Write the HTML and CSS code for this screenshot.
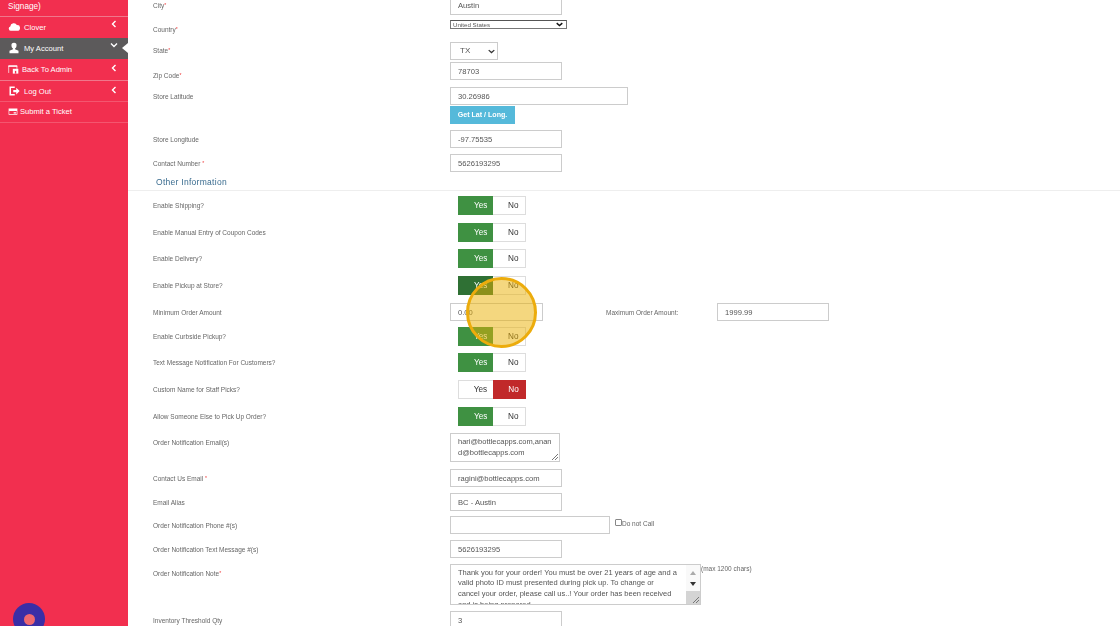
FILE: index.html
```html
<!DOCTYPE html>
<html lang="en">
<head>
<meta charset="utf-8">
<title>My Account</title>
<link rel="stylesheet" href="styles.css">
</head>
<body>
<div class="page">
  <aside class="sidebar">
    <div class="side-top">Signage)</div>
    <a class="nav up">
      <svg class="ico" viewBox="0 0 16 16"><path fill="#fff" d="M4 13a3 3 0 0 1-1-5.800A4.800 4.800 0 0 1 12 5.500 3.800 3.800 0 0 1 16 9.500c0 2-1.500 3.500-3.500 3.500z"/></svg>
      <span>Clover</span>
      <svg class="chev" viewBox="0 0 8 8"><path d="M5.500 1 2.500 4l3 3" fill="none" stroke="#fff" stroke-width="1.400"/></svg>
    </a>
    <a class="nav up active">
      <svg class="ico" viewBox="0 0 16 16"><path fill="#fff" d="M8 1a3.400 3.400 0 0 1 3.400 3.700c0 1.900-1 3.500-2 4v1l4.600 2V15H2v-3.300l4.600-2v-1c-1-.5-2-2.100-2-4A3.400 3.400 0 0 1 8 1z"/></svg>
      <span>My Account</span>
      <svg class="chev" viewBox="0 0 8 8"><path d="M1 2.500 4 5.500l3-3" fill="none" stroke="#fff" stroke-width="1.400"/></svg>
      <i class="notch"></i>
    </a>
    <a class="nav line">
      <svg class="ico wide" viewBox="0 0 16 14"><path fill="none" stroke="#fff" d="M1 12V2h12v4"/><path fill="#fff" d="M.5 1h13v2H.5z"/><rect fill="#fff" x="7" y="6" width="8" height="7"/><rect fill="#f22f4f" x="10" y="9" width="2" height="4"/></svg>
      <span class="tight">Back To Admin</span>
      <svg class="chev low" viewBox="0 0 8 8"><path d="M5.500 1 2.500 4l3 3" fill="none" stroke="#fff" stroke-width="1.400"/></svg>
    </a>
    <a class="nav faint">
      <svg class="ico" viewBox="0 0 16 16"><path fill="none" stroke="#fff" stroke-width="2" d="M9 3H3v10h6"/><path fill="#fff" d="M7 6.500h4V3.500L15.500 8 11 12.500v-3H7z"/></svg>
      <span>Log Out</span>
      <svg class="chev low" viewBox="0 0 8 8"><path d="M5.500 1 2.500 4l3 3" fill="none" stroke="#fff" stroke-width="1.400"/></svg>
    </a>
    <a class="nav up faint ticket">
      <svg class="ico small" viewBox="0 0 16 14"><path fill="#fff" d="M1 2h14v10H1zM2 6v5h12V6zM9 8h4v2H9z" fill-rule="evenodd"/></svg>
      <span>Submit a Ticket</span>
    </a>
    <div class="dot"><i></i></div>
  </aside>

  <main class="main">
    <div class="row r-city"><label>City<em>*</em></label><div class="input">Austin</div></div>
    <div class="row r-country"><label>Country<em>*</em></label>
      <div class="native">United States<svg viewBox="0 0 10 6"><path d="M1 1l4 3.500L9 1" fill="none" stroke="#111" stroke-width="2"/></svg></div></div>
    <div class="row r-state"><label>State<em>*</em></label>
      <div class="select">TX<svg viewBox="0 0 10 6"><path d="M1 1l4 3.500L9 1" fill="none" stroke="#333" stroke-width="1.800"/></svg></div></div>
    <div class="row r-zip"><label>Zip Code<em>*</em></label><div class="input">78703</div></div>
    <div class="row r-lat"><label>Store Latitude</label>
      <div class="stack"><div class="input long">30.26986</div><button class="btn">Get Lat / Long.</button></div></div>
    <div class="row r-18"><label>Store Longitude</label><div class="input">-97.75535</div></div>
    <div class="row r-18"><label>Contact Number <em>*</em></label><div class="input">5626193295</div></div>

    <h2 class="section">Other Information</h2>

    <div class="row r-tog"><label>Enable Shipping?</label><div class="toggle"><b class="yes on">Yes</b><b class="no">No</b></div></div>
    <div class="row r-tog"><label>Enable Manual Entry of Coupon Codes</label><div class="toggle"><b class="yes on">Yes</b><b class="no">No</b></div></div>
    <div class="row r-tog"><label>Enable Delivery?</label><div class="toggle"><b class="yes on">Yes</b><b class="no">No</b></div></div>
    <div class="row r-tog"><label>Enable Pickup at Store?</label><div class="toggle"><b class="yes on dark">Yes</b><b class="no">No</b></div></div>
    <div class="row r-min"><label>Minimum Order Amount</label><div class="input mid">0.00</div>
      <label class="max">Maximum Order Amount:</label><div class="input">1999.99</div></div>
    <div class="row r-tog"><label>Enable Curbside Pickup?</label><div class="toggle"><b class="yes on">Yes</b><b class="no">No</b></div></div>
    <div class="row r-tog"><label>Text Message Notification For Customers?</label><div class="toggle"><b class="yes on">Yes</b><b class="no">No</b></div></div>
    <div class="row r-tog"><label>Custom Name for Staff Picks?</label><div class="toggle"><b class="yes">Yes</b><b class="no off">No</b></div></div>
    <div class="row r-tog"><label>Allow Someone Else to Pick Up Order?</label><div class="toggle"><b class="yes on">Yes</b><b class="no">No</b></div></div>
    <div class="row r-ta1"><label>Order Notification Email(s)</label>
      <div class="area small-area">hari@bottlecapps.com,anan d@bottlecapps.com<svg class="grip" viewBox="0 0 8 8"><path d="M1 7 7 1M4 7l3-3" stroke="#777" fill="none"/></svg></div></div>
    <div class="row r-18b"><label>Contact Us Email <em>*</em></label><div class="input">ragini@bottlecapps.com</div></div>
    <div class="row r-18b"><label>Email Alias</label><div class="input">BC - Austin</div></div>
    <div class="row r-18b"><label>Order Notification Phone #(s)</label><div class="input phone"></div>
      <span class="check"><i></i>Do not Call</span></div>
    <div class="row r-18b"><label>Order Notification Text Message #(s)</label><div class="input">5626193295</div></div>
    <div class="row r-ta2"><label>Order Notification Note<em>*</em></label>
      <div class="area big-area"><p>Thank you for your order! You must be over 21 years of age and a<br>valid photo ID must presented during pick up. To change or<br>cancel your order, please call us..! Your order has been received<br>and is being prepared</p>
        <div class="sbar"><svg viewBox="0 0 14 26"><path d="M4 10l3-4 3 4z" fill="#aaa"/><path d="M4 17h6l-3 4z" fill="#333"/></svg></div>
        <svg class="grip" viewBox="0 0 8 8"><path d="M1 7 7 1M4 7l3-3" stroke="#777" fill="none"/></svg>
      </div><span class="hint">(max 1200 chars)</span></div>
    <div class="row r-18b"><label>Inventory Threshold Qty</label><div class="input">3</div></div>
  </main>
  <div class="spot"></div>
</div>
</body>
</html>
```
FILE: styles.css
```css
* { box-sizing: border-box; }
html, body { margin: 0; height: 100%; overflow: hidden; background: #fff; }
body { font-family: "Liberation Sans", Arial, sans-serif; color: #555; }
.page { display: flex; width: 1120px; height: 626px; overflow: hidden; position: relative; filter: blur(0.35px); }

/* sidebar */
.sidebar { position: relative; flex: 0 0 128px; background: #f22f4f; color: #fff; font-size: 7.600px; padding-top: 1px; }
.side-top { height: 16px; padding-left: 8px; font-size: 8.200px; line-height: 11px; border-bottom: 1px solid #f0778b; }
.nav { display: flex; align-items: center; height: 21px; padding-left: 8px; position: relative; }
.nav.up { padding-bottom: 1px; }
.nav span { margin-left: 4px; }
.nav span.tight { margin-left: 3px; }
.active { background: #5c5a5b; }
.line { border-bottom: 1px solid #f0778b; height: 22px; }
.faint { border-bottom: 1px solid #f4566f; }
.ticket { padding-left: 8px; }
.ticket span { margin-left: 2px; }
.ico { width: 12px; height: 12px; flex: none; }
.ico.wide { width: 11px; height: 11px; }
.ico.small { width: 10px; height: 9px; }
.chev { position: absolute; right: 10px; top: 3px; width: 8px; height: 8px; }
.chev.low { top: 5px; }
.notch { position: absolute; right: 0; top: 5px; border: 5px solid transparent; border-right: 6px solid #fff; border-left: 0; }
.dot { position: absolute; left: 13px; top: 603px; width: 32px; height: 32px; border-radius: 50%; background: #3a2ea6; display: flex; align-items: center; justify-content: center; }
.dot i { width: 11px; height: 11px; border-radius: 50%; background: #f0686f; }

/* form */
.main { flex: 1; margin-top: -8px; min-width: 0; }
.row { display: flex; align-items: flex-start; padding-left: 25px; }
.row > label { flex: 0 0 297px; font-size: 6.500px; color: #666; line-height: 9px; padding-top: 5px; }
em { color: #e33; font-style: normal; font-size: 5px; vertical-align: top; }
.input { width: 112px; height: 18px; border: 1px solid #ccc; background: #fff; font-size: 7.600px; line-height: 17px; padding-left: 7px; color: #555; flex: none; }
.r-city { height: 28px; }
.r-city .input { height: 23px; line-height: 25px; }
.row.r-city > label { padding-top: 9px; }
.r-country { height: 22px; }
.native { width: 117px; height: 9px; border: 1px solid #777; border-top-color: #555; font-size: 6.200px; line-height: 7px; padding-left: 2px; position: relative; color: #555; flex: none; }
.native svg { position: absolute; right: 3px; top: 1px; width: 7px; height: 5px; }
.r-state { height: 20px; }
.row.r-state > label { padding-top: 4px; }
.select { width: 48px; height: 18px; border: 1px solid #ccc; font-size: 8px; line-height: 16px; padding-left: 9px; position: relative; flex: none; }
.select svg { position: absolute; right: 2px; top: 6px; width: 7px; height: 5px; }
.r-zip { height: 25px; }
.row.r-zip > label { padding-top: 9px; }
.r-18 { height: 24px; }
.r-lat { height: 43px; }
.stack { display: flex; flex-direction: column; gap: 1px; align-items: flex-start; }
.input.long { width: 178px; }
.btn { width: 65px; height: 18px; border: 0; padding: 0; background: #55b9da; color: #fff; font: 700 7.100px "Liberation Sans", Arial, sans-serif; }
.section { margin: 0 0 5px; height: 13px; padding-left: 28px; font-size: 8.500px; letter-spacing: .28px; line-height: 9px; font-weight: 400; color: #3a6c8f; border-bottom: 1px solid #eee; }
.r-tog { height: 26.700px; }
.toggle { display: flex; margin-left: 8px; width: 68px; height: 19px; border: 1px solid #ddd; font-size: 8.200px; line-height: 17px; flex: none; }
.toggle b { display: block; font-weight: 400; text-align: center; color: #333; }
.yes { width: 36px; padding-left: 10px; margin: -1px 0 -1px -1px; line-height: 19px; }
.no { width: 32px; padding-left: 8px; }
.on { background: #3f9142; color: #fff !important; }
.dark { background: #2f7034; }
.off { background: #c1292a; color: #fff !important; margin: -1px -1px -1px 0; line-height: 19px; width: 34px; }
.r-min { height: 24px; }
.input.mid { width: 93px; }
.row > label.max { flex: 0 0 111px; margin-left: 63px; }
.area { position: relative; border: 1px solid #ccc; font-size: 7.500px; line-height: 10.700px; color: #555; background: #fff; flex: none; overflow: hidden; }
.small-area { width: 110px; height: 29px; padding: 3px 7px 0; word-break: break-all; }
.r-ta1 { height: 36px; margin-top: -.500px; }
.r-18b { height: 23.700px; }
.grip { position: absolute; right: 0; bottom: 0; width: 8px; height: 8px; }
.phone { width: 160px; }
.check { font-size: 6.500px; margin-left: 5px; display: flex; color: #666; line-height: 9px; padding-top: 3px; }
.check i { width: 7px; height: 7px; border: 1px solid #888; border-radius: 1px; margin-top: 0; }
.r-ta2 { height: 47px; }
.big-area { width: 251px; height: 41px; padding: 3px 18px 0 7px; }
.big-area p { margin: 0; white-space: nowrap; }
.sbar { position: absolute; right: 0; top: 0; bottom: 0; width: 14px; background: #f9f9f9; }
.sbar svg { width: 14px; height: 26px; display: block; }
.sbar::after { content: ""; position: absolute; left: 0; right: 0; bottom: 0; height: 13px; background: #d4d4d4; }
.big-area .grip { z-index: 1; }
.hint { font-size: 6.500px; color: #666; line-height: 9px; }

/* click highlight */
.spot { position: absolute; left: 466px; top: 277px; width: 71px; height: 71px; border-radius: 50%; border: 3px solid #ecac0c; background: rgba(233, 175, 0, .5); }
```
